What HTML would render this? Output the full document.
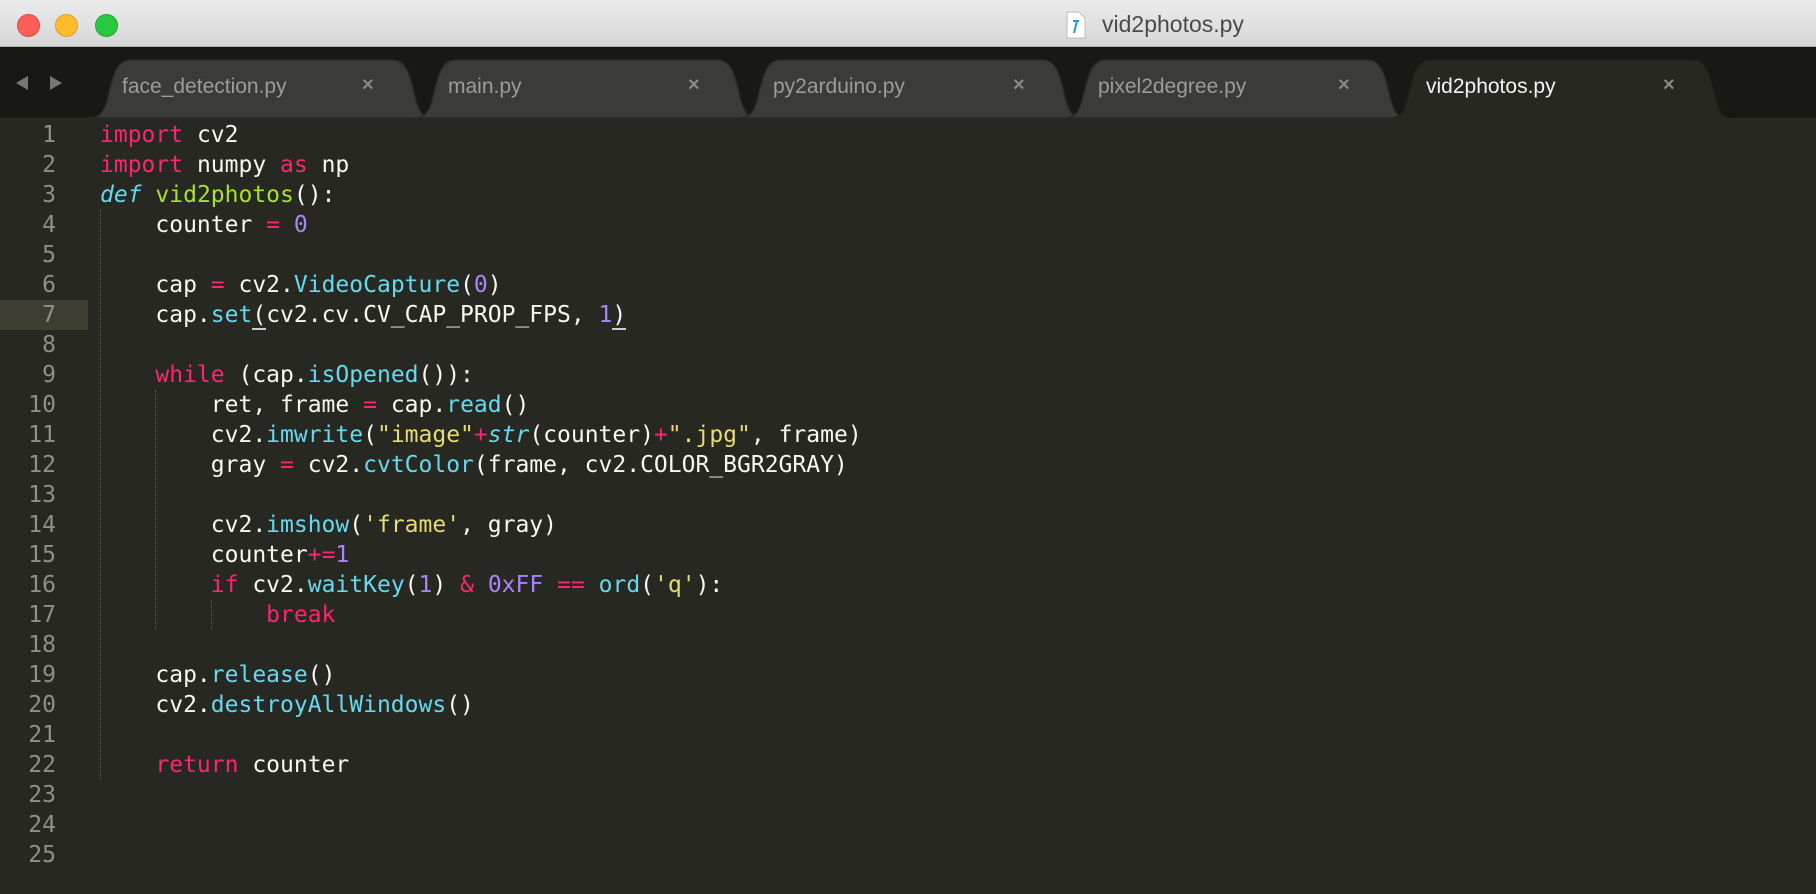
<!DOCTYPE html>
<html><head><meta charset="utf-8"><style>
*{margin:0;padding:0;box-sizing:border-box}
body{width:1816px;height:894px;background:#272822;overflow:hidden;position:relative;font-family:"Liberation Sans",sans-serif}
#title{position:absolute;left:0;top:0;width:1816px;height:47px;background:linear-gradient(#ececec,#d6d6d6);border-bottom:1px solid #b0b0b0}
.tl{position:absolute;top:14px;width:23px;height:23px;border-radius:50%}
#tabbar{position:absolute;left:0;top:47px;width:1816px;height:71px;background:#181815}
.tt{position:absolute;top:28px;font-size:21px;color:#9c9c9a}
.tx{position:absolute;top:27px;font-size:20px;color:#8a8a88;font-weight:bold}
#code{position:absolute;left:0;top:120px;font-family:"DejaVu Sans Mono","Liberation Mono",monospace;font-size:23px;line-height:30px;color:#f8f8f2;white-space:pre}
.ln{position:absolute;left:0;width:56px;text-align:right;color:#8f908a;font-family:"DejaVu Sans Mono",monospace;font-size:23px;line-height:30px}
.k{color:#f92672}.f{color:#66d9ef}.g{color:#a6e22e}.n{color:#ae81ff}.s{color:#e6db74}.it{font-style:italic}
.guide{position:absolute;width:0;border-left:1px dotted #55564f}
u{text-decoration:none;border-bottom:2px solid #ccc}
</style></head><body>
<div id="title">
<div class="tl" style="left:17px;background:#fc5f57;border:1px solid #de4a42"></div>
<div class="tl" style="left:55px;background:#fdbc2e;border:1px solid #dea024"></div>
<div class="tl" style="left:95px;background:#28c840;border:1px solid #1daa2d"></div>
<svg style="position:absolute;left:1066px;top:11px" width="20" height="28" viewBox="0 0 20 28"><path d="M1 1h12l6 6v20H1z" fill="#fff" stroke="#bbb"/><path d="M8 22l3-12M7 10h6" stroke="#1a9ce0" stroke-width="2" fill="none"/></svg>
<div style="position:absolute;left:1102px;top:11px;font-size:23px;color:#4a4a4a">vid2photos.py</div>
</div>
<div id="tabbar">
<svg style="position:absolute;left:0;top:0" width="1816" height="71">
<path d="M16 36L28 29v14z M62 36L50 29v14z" fill="#777"/>
<g fill="#3b3b39" stroke="#2a2a28" stroke-width="1.5">
<path d="M88 71C100 71 104 66 108 50C112 32 116 13 130 13H393C407 13 411 32 415 50C419 66 423 71 435 71Z"/>
<path d="M413 71C425 71 429 66 433 50C437 32 441 13 455 13H718C732 13 736 32 740 50C744 66 748 71 760 71Z"/>
<path d="M738 71C750 71 754 66 758 50C762 32 766 13 780 13H1043C1057 13 1061 32 1065 50C1069 66 1073 71 1085 71Z"/>
<path d="M1063 71C1075 71 1079 66 1083 50C1087 32 1091 13 1105 13H1368C1382 13 1386 32 1390 50C1394 66 1398 71 1410 71Z"/>
</g>
<path d="M1388 72C1400 72 1404 66 1408 50C1412 32 1416 13 1430 13H1693C1707 13 1711 32 1715 50C1719 66 1723 72 1735 72Z" fill="#272822" stroke="#1f1f1c" stroke-width="1.5"/>
</svg>
<span class="tt" style="left:122px">face_detection.py</span><span class="tx" style="left:362px">×</span>
<span class="tt" style="left:448px">main.py</span><span class="tx" style="left:688px">×</span>
<span class="tt" style="left:773px">py2arduino.py</span><span class="tx" style="left:1013px">×</span>
<span class="tt" style="left:1098px">pixel2degree.py</span><span class="tx" style="left:1338px">×</span>
<span class="tt" style="left:1426px;color:#f4f4f4">vid2photos.py</span><span class="tx" style="left:1663px">×</span>
</div>
<div style="position:absolute;left:0;top:300px;width:88px;height:30px;background:#3e3d32"></div>
<div class="guide" style="left:100px;top:210px;height:570px"></div>
<div class="guide" style="left:155px;top:390px;height:240px"></div>
<div class="guide" style="left:211px;top:600px;height:30px"></div>
<div class="ln" style="top:120px">1<br>2<br>3<br>4<br>5<br>6<br>7<br>8<br>9<br>10<br>11<br>12<br>13<br>14<br>15<br>16<br>17<br>18<br>19<br>20<br>21<br>22<br>23<br>24<br>25</div>
<div id="code" style="left:100px"><span class="k">import</span> cv2
<span class="k">import</span> numpy <span class="k">as</span> np
<span class="f it">def</span> <span class="g">vid2photos</span>():
    counter <span class="k">=</span> <span class="n">0</span>

    cap <span class="k">=</span> cv2.<span class="f">VideoCapture</span>(<span class="n">0</span>)
    cap.<span class="f">set</span><u>(</u>cv2.cv.CV_CAP_PROP_FPS, <span class="n">1</span><u>)</u>

    <span class="k">while</span> (cap.<span class="f">isOpened</span>()):
        ret, frame <span class="k">=</span> cap.<span class="f">read</span>()
        cv2.<span class="f">imwrite</span>(<span class="s">"image"</span><span class="k">+</span><span class="f it">str</span>(counter)<span class="k">+</span><span class="s">".jpg"</span>, frame)
        gray <span class="k">=</span> cv2.<span class="f">cvtColor</span>(frame, cv2.COLOR_BGR2GRAY)

        cv2.<span class="f">imshow</span>(<span class="s">'frame'</span>, gray)
        counter<span class="k">+=</span><span class="n">1</span>
        <span class="k">if</span> cv2.<span class="f">waitKey</span>(<span class="n">1</span>) <span class="k">&amp;</span> <span class="n">0xFF</span> <span class="k">==</span> <span class="f">ord</span>(<span class="s">'q'</span>):
            <span class="k">break</span>

    cap.<span class="f">release</span>()
    cv2.<span class="f">destroyAllWindows</span>()

    <span class="k">return</span> counter
</div>
</body></html>
